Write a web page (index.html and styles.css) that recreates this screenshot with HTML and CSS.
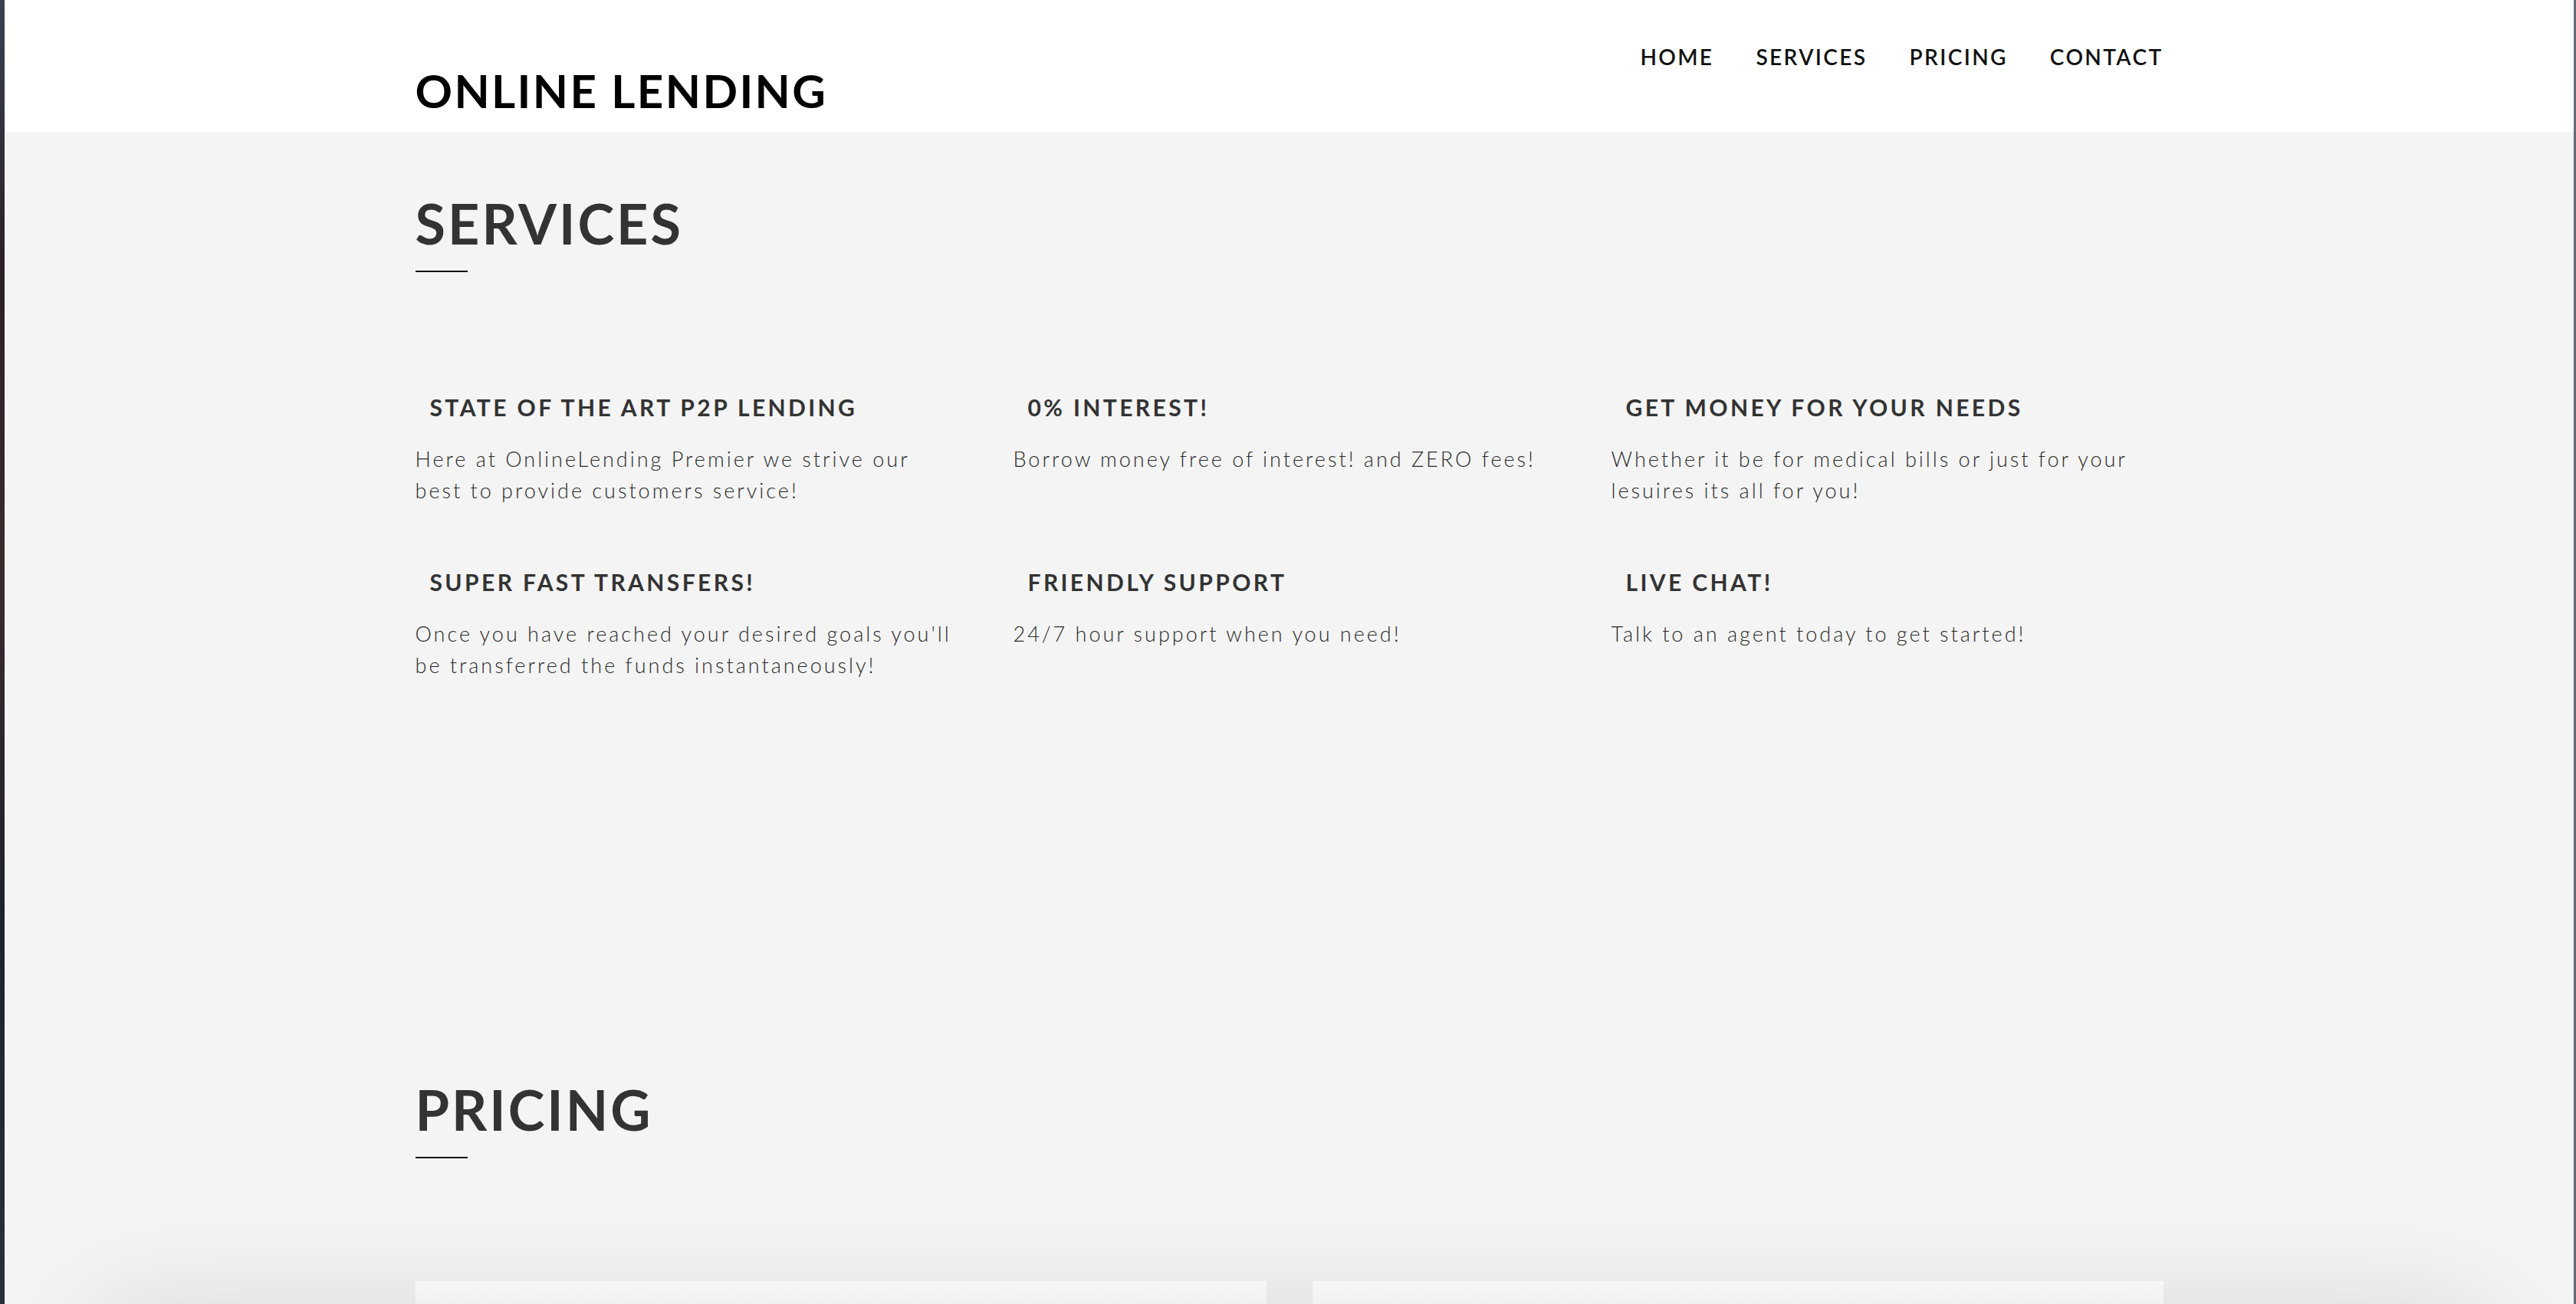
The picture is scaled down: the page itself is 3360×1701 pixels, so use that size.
FILE: index.html
```html
<!DOCTYPE html>
<html lang="en">
<head>
<meta charset="utf-8">
<title>Online Lending</title>
<link rel="stylesheet" href="styles.css">
</head>
<body>
<div class="window">
  <header class="site-header">
    <div class="container header-inner">
      <a class="logo" href="#">ONLINE LENDING</a>
      <nav class="nav">
        <a href="#">HOME</a>
        <a href="#">SERVICES</a>
        <a href="#">PRICING</a>
        <a href="#">CONTACT</a>
      </nav>
    </div>
  </header>

  <section class="services">
    <div class="container">
      <h2 class="section-title">SERVICES</h2>
      <div class="service-grid">
        <div class="service">
          <h3>STATE OF THE ART P2P LENDING</h3>
          <p>Here at OnlineLending Premier we strive our best to provide customers service!</p>
        </div>
        <div class="service">
          <h3>0% INTEREST!</h3>
          <p>Borrow money free of interest! and ZERO fees!</p>
        </div>
        <div class="service">
          <h3>GET MONEY FOR YOUR NEEDS</h3>
          <p>Whether it be for medical bills or just for your lesuires its all for you!</p>
        </div>
        <div class="service">
          <h3>SUPER FAST TRANSFERS!</h3>
          <p>Once you have reached your desired goals you'll be transferred the funds instantaneously!</p>
        </div>
        <div class="service">
          <h3>FRIENDLY SUPPORT</h3>
          <p>24/7 hour support when you need!</p>
        </div>
        <div class="service">
          <h3>LIVE CHAT!</h3>
          <p>Talk to an agent today to get started!</p>
        </div>
      </div>
    </div>
  </section>

  <section class="pricing">
    <div class="container">
      <h2 class="section-title">PRICING</h2>
      <div class="pricing-stage">
        <div class="price-card"></div>
        <div class="price-card"></div>
      </div>
    </div>
  </section>
</div>
</body>
</html>
```

FILE: styles.css
```css
html, body {
  margin: 0;
  padding: 0;
  height: 100%;
  overflow: hidden;
}

body {
  background:
    linear-gradient(to bottom, #3a4150 0, #2b2027 20%, #3a2a2e 45%, #1d222c 70%, #2a2f3a 100%) left top / 6px 100% no-repeat,
    #646a76;
  font-family: Lato, "Open Sans", "Liberation Sans", sans-serif;
}

.window {
  height: 1701px;
  margin: 0 3px 0 6px;
  background: #f4f4f4;
  overflow: hidden;
}

.container {
  width: 2280px;
  margin: 0 auto;
}

/* Header */
.site-header {
  background: #ffffff;
  height: 173px;
  box-shadow: 0 1px 0 #eeeeee;
  position: relative;
  z-index: 2;
}

.header-inner {
  display: flex;
  justify-content: space-between;
  align-items: flex-start;
}

.logo {
  margin-top: 88px;
  font-size: 60px;
  line-height: 60px;
  font-weight: 700;
  letter-spacing: 2.4px;
  color: #000;
  text-decoration: none;
}

.nav {
  display: flex;
  gap: 55px;
  margin-top: 60px;
}

.nav a {
  font-size: 28px;
  line-height: 28px;
  font-weight: 600;
  letter-spacing: 2.4px;
  color: #111;
  text-decoration: none;
}

/* Section titles */
.section-title {
  margin: 0;
  font-size: 72px;
  line-height: 72px;
  font-weight: 700;
  letter-spacing: 3px;
  color: #333;
}

.section-title::after {
  content: "";
  display: block;
  width: 68px;
  height: 2px;
  margin-top: 26px;
  background: #111;
}

/* Services */
.services {
  padding: 82px 0 441px;
}

.service-grid {
  display: grid;
  grid-template-columns: repeat(3, 1fr);
  column-gap: 60px;
  row-gap: 85px;
  margin-top: 162px;
}

.service h3 {
  margin: 0;
  padding-left: 19px;
  font-size: 30px;
  line-height: 29px;
  font-weight: 700;
  letter-spacing: 3.4px;
  color: #333;
}

.service p {
  margin: 32px 0 0;
  max-width: 705px;
  font-size: 27px;
  line-height: 41px;
  font-weight: 300;
  letter-spacing: 3px;
  color: #2a2a2a;
}

/* Pricing */
.pricing {
  padding-top: 82px;
}

.pricing-stage {
  position: relative;
  display: grid;
  grid-template-columns: 1fr 1fr;
  column-gap: 60px;
  margin-top: 160px;
}

.pricing-stage::before {
  content: "";
  position: absolute;
  top: 50px;
  left: -420px;
  right: -420px;
  height: 800px;
  background: #e3e3e3;
  box-shadow: 0 0 160px rgba(0, 0, 0, 0.14);
  border-radius: 40px;
}

.price-card {
  position: relative;
  z-index: 1;
  height: 600px;
  background: linear-gradient(to bottom, #f7f7f7 0, #efefef 40px, #ececec 100px);
}
```
